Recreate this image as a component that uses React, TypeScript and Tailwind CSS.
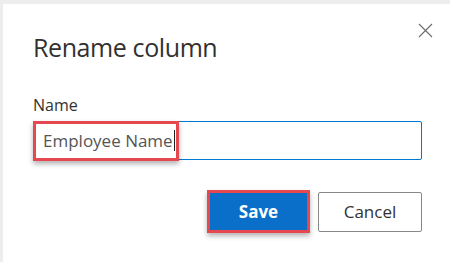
export default function App() {
  return (
    <div className="w-[450px] h-[262px] bg-[#ededed] pt-[4px] pl-[3px] font-['Open_Sans',sans-serif] overflow-hidden">
      <div className="relative w-full h-full bg-white pl-[30px] pr-[28px]">
        {/* Close */}
        <button className="absolute top-[19px] right-[17px] w-[15px] h-[15px] flex items-center justify-center">
          <svg width="15" height="15" viewBox="0 0 15 15" fill="none">
            <path d="M1 1L14 14M14 1L1 14" stroke="#6b6b6b" strokeWidth="1.1" />
          </svg>
        </button>

        <h2 className="pt-[30px] text-[25px] leading-[26px] font-normal text-[#323130] tracking-[-0.4px]">
          Rename column
        </h2>

        <label className="block mt-[37px] text-[16px] leading-[16px] text-[#323130]">Name</label>

        <div className="relative mt-[8px] w-[389px] h-[39px] border border-[#0078d4] rounded-[2px]">
          <div className="absolute -left-px -top-px w-[146px] h-[40px] border-[3px] border-[#e5484f] shadow-[0_3px_5px_rgba(0,0,0,0.3)]" />
          <div className="flex items-center h-full pl-[9px] text-[17px] text-[#555555]">
            <span>Employee Name</span>
            <span className="w-px h-[21px] bg-[#222] ml-[1px]" />
          </div>
        </div>

        <div className="flex justify-end items-center gap-[8px] mt-[30px]">
          <button className="w-[103px] h-[43px] bg-[#0a6fc9] border-[3px] border-[#e5484f] shadow-[0_3px_5px_rgba(0,0,0,0.3)] text-white text-[17px] font-bold">
            Save
          </button>
          <button className="w-[104px] h-[40px] bg-white border border-[#8a8886] rounded-[2px] text-[#323130] text-[17px]">
            Cancel
          </button>
        </div>
      </div>
    </div>
  )
}
